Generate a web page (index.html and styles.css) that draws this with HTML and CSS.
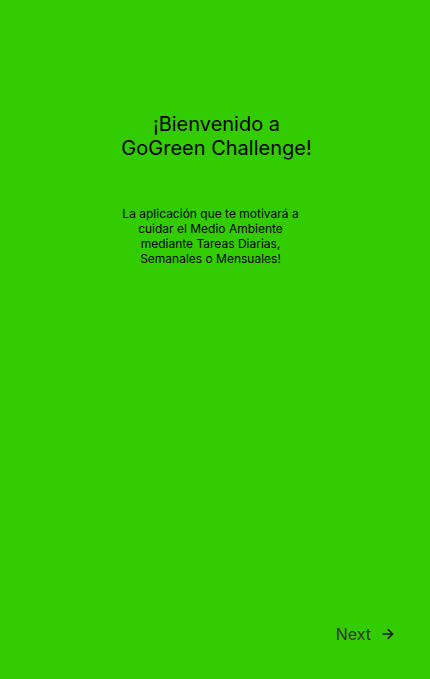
FILE: index.html
```html
<!DOCTYPE html>
<html lang="es">
<head>
<meta charset="utf-8">
<link rel="stylesheet" href="styles.css">
</head>
<body>
<main class="screen">
  <section class="intro">
    <h1 class="title">¡Bienvenido a<br>GoGreen Challenge!</h1>
    <p class="lead">La aplicación que te motivará a cuidar el Medio Ambiente mediante Tareas Diarias, Semanales o Mensuales!</p>
  </section>
  <footer class="footer">
    <button class="next">Next
      <svg class="arrow" width="12" height="12" viewBox="0 0 12 12" fill="none" stroke="currentColor" stroke-width="1.6" stroke-linecap="round" stroke-linejoin="round"><path d="M1 6h9.6"/><path d="M6.2 1.6L10.6 6 6.2 10.4"/></svg>
    </button>
  </footer>
</main>
</body>
</html>
```
FILE: styles.css
```css
html, body { margin: 0; padding: 0; }
body {
  background: #33cc00;
  font-family: Inter, "Noto Sans", sans-serif;
  color: #000;
}
.screen {
  width: 430px;
  height: 679px;
  display: flex;
  flex-direction: column;
  box-sizing: border-box;
}
.intro {
  flex: 1;
  display: flex;
  flex-direction: column;
  align-items: center;
  padding-top: 112px;
}
.title {
  margin: 0 0 0 3px;
  font-size: 20px;
  font-weight: 400;
  line-height: 24px;
  text-align: center;
}
.lead {
  margin: 46px 9px 0 0;
  width: 186px;
  font-size: 12px;
  line-height: 15px;
  text-align: center;
}
.footer {
  display: flex;
  justify-content: flex-end;
  padding: 0 36px 35px 0;
}
.next {
  background: none;
  border: 0;
  padding: 0;
  display: flex;
  align-items: center;
  gap: 11px;
  font-family: inherit;
  font-size: 16px;
  color: #333;
  line-height: 20px;
}
.arrow { display: block; color: #1a1a1a; }
```
